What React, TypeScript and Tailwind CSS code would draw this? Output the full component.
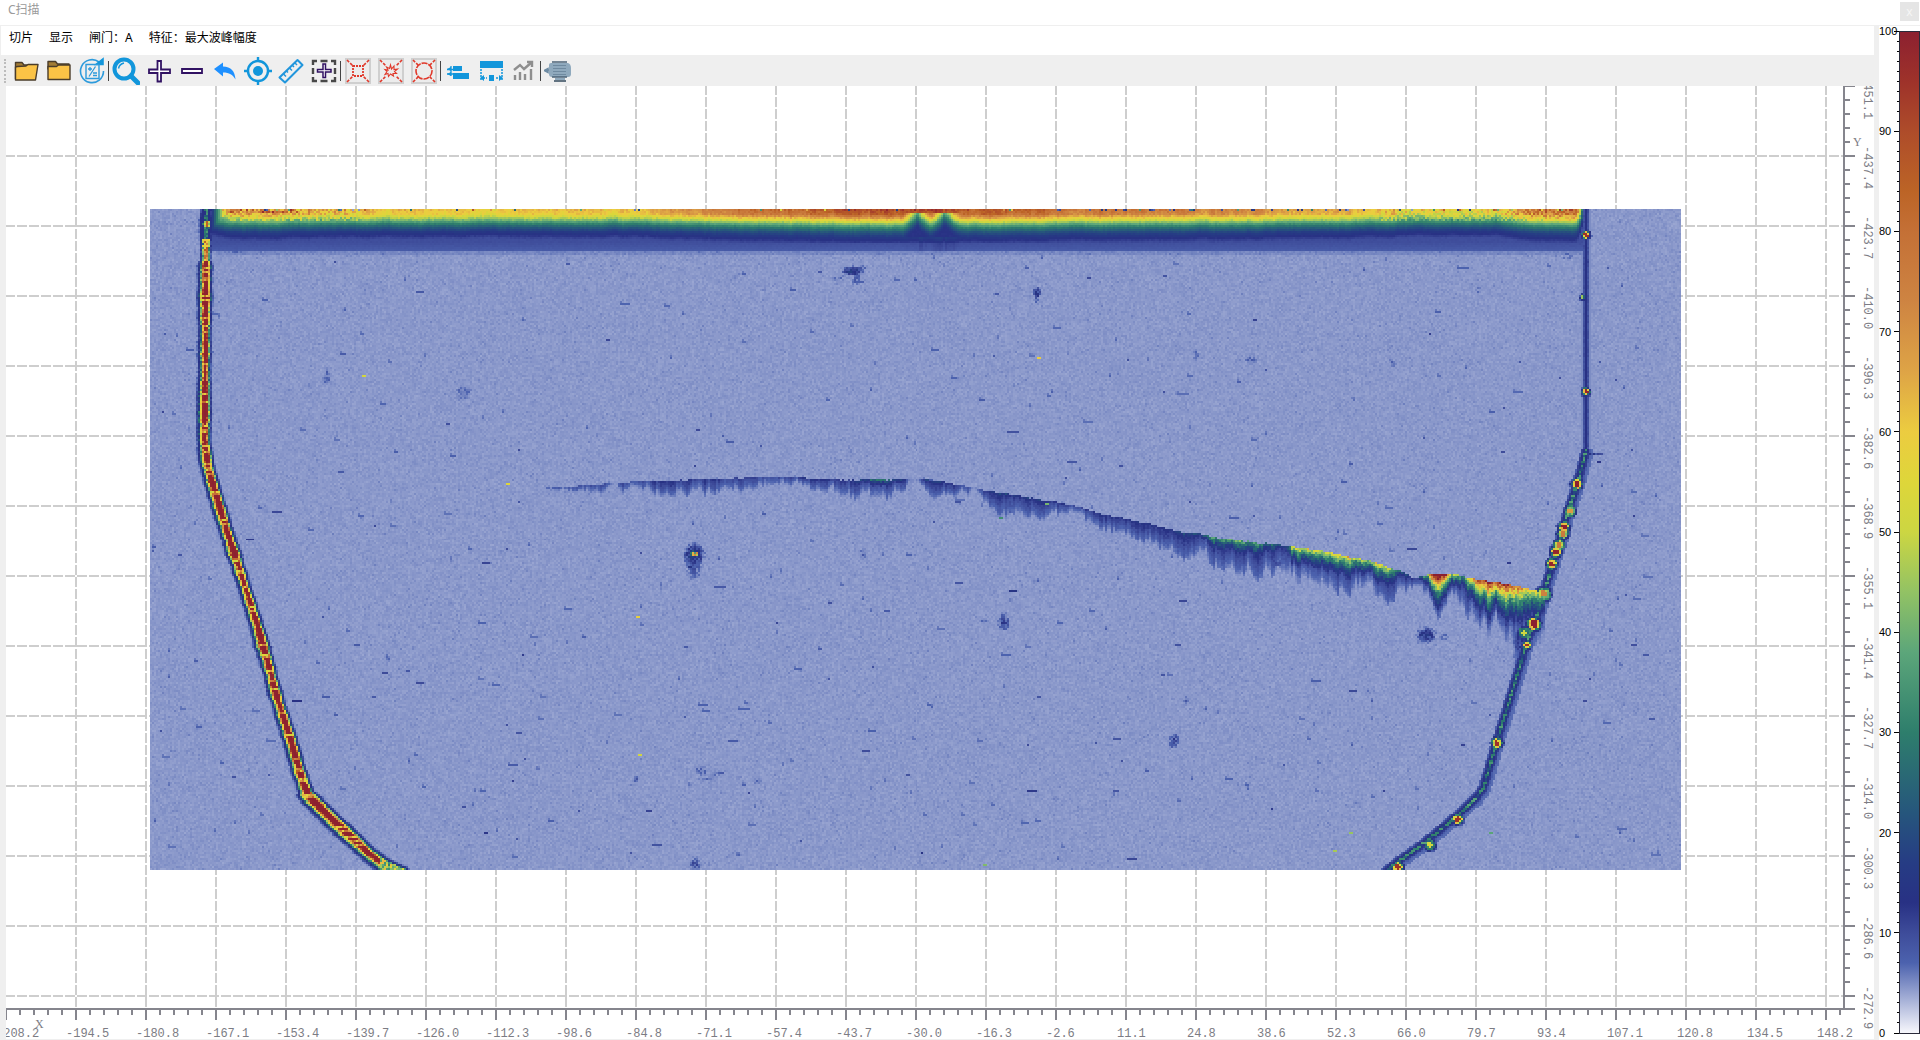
import { useEffect, useRef } from 'react';
import type { ReactNode } from 'react';

const COLUMNS = 766;
const ROWS = 331;
const ORIGIN_X = 150;
const ORIGIN_Y = 209;
const STEP = 70;

const X_LABELS = [
  '-208.2', '-194.5', '-180.8', '-167.1', '-153.4', '-139.7', '-126.0', '-112.3', '-98.6',
  '-84.8', '-71.1', '-57.4', '-43.7', '-30.0', '-16.3', '-2.6', '11.1', '24.8', '38.6',
  '52.3', '66.0', '79.7', '93.4', '107.1', '120.8', '134.5', '148.2'
];

const Y_LABELS = [
  '-451.1', '-437.4', '-423.7', '-410.0', '-396.3', '-382.6', '-368.9',
  '-355.1', '-341.4', '-327.7', '-314.0', '-300.3', '-286.6', '-272.9'
];

// amplitude (%) -> colour
const PALETTE: [number, number, number, number][] = [
  [0, 247, 247, 252],
  [7, 76, 98, 174],
  [10, 62, 76, 154],
  [13, 40, 49, 132],
  [17, 38, 60, 132],
  [22, 38, 86, 124],
  [30, 46, 126, 108],
  [38, 92, 166, 122],
  [44, 146, 194, 100],
  [50, 204, 214, 66],
  [55, 222, 214, 58],
  [60, 236, 204, 64],
  [66, 222, 164, 70],
  [73, 206, 132, 66],
  [80, 196, 112, 54],
  [84, 188, 100, 38],
  [90, 174, 76, 42],
  [95, 158, 50, 42],
  [100, 140, 32, 48]
];

type Point = [number, number];

const LEFT_WALL: Point[] = [
  [207, 205], [206, 300], [205, 440], [208, 465], [215, 490], [227, 530], [243, 580], [258, 627],
  [270, 670], [278, 700], [291, 740], [300, 772], [308, 795], [322, 810], [335, 822], [352, 838],
  [370, 855], [386, 866], [402, 874]
];

const LEFT_PROFILE: Point[] = [
  [0, 100], [2.6, 98], [3.4, 66], [4.4, 50], [5.2, 32], [6.2, 15], [7.6, 11], [8.6, 6.5], [9.6, 4]
];

const RIGHT_WALL: Point[] = [
  [1587, 205], [1587, 450], [1583, 466], [1578, 485], [1573, 500], [1567, 518], [1560, 545],
  [1553, 567], [1546, 590], [1538, 617], [1527, 646], [1511, 700], [1498, 742], [1490, 770],
  [1484, 790], [1477, 799], [1460, 815], [1440, 832], [1420, 848], [1400, 862], [1386, 873]
];

const CRACK_EDGE: Point[] = [
  [545, 488], [600, 484], [640, 482], [700, 479], [770, 477], [800, 478], [830, 480], [900, 480],
  [925, 479], [950, 483], [985, 490], [1020, 496], [1060, 503], [1100, 513], [1150, 524],
  [1180, 531], [1240, 541], [1290, 547], [1330, 553], [1380, 564], [1400, 571], [1416, 580],
  [1430, 575], [1450, 574], [1480, 581], [1520, 587], [1546, 594]
];

const CRACK_LEVEL: Point[] = [
  [545, 6], [600, 9], [700, 12], [760, 9], [798, 10], [802, 18], [850, 12], [855, 20], [880, 30],
  [904, 18], [908, 6], [922, 7], [926, 20], [960, 13], [975, 7], [1000, 18], [1050, 16],
  [1100, 13], [1170, 16], [1200, 20], [1210, 34], [1250, 34], [1288, 20], [1293, 56], [1340, 50],
  [1380, 54], [1400, 28], [1416, 12], [1428, 44], [1434, 110], [1444, 110], [1452, 64], [1465, 30],
  [1475, 76], [1490, 105], [1500, 105], [1515, 80], [1530, 50], [1546, 54]
];

const CRACK_DEPTH: Point[] = [
  [545, 3], [600, 9], [700, 14], [800, 9], [830, 15], [880, 20], [904, 14], [910, 6], [922, 6],
  [930, 16], [980, 9], [1005, 24], [1060, 15], [1100, 14], [1200, 24], [1285, 28], [1300, 32],
  [1390, 26], [1416, 10], [1432, 24], [1440, 40], [1450, 22], [1465, 30], [1490, 52], [1546, 50]
];

const BAND_LEVEL: Point[] = [
  [207, 50], [225, 66], [245, 72], [280, 70], [340, 63], [500, 62], [650, 65], [720, 76],
  [850, 92], [900, 94], [1000, 88], [1100, 80], [1250, 72], [1350, 65], [1420, 57], [1500, 58],
  [1535, 78], [1565, 88], [1578, 80], [1583, 30]
];

const BAND_PROFILE: Point[] = [
  [0, 1], [5, 0.94], [8, 0.8], [11, 0.66], [14, 0.51], [18, 0.37], [23, 0.25], [28, 0.18],
  [32, 0.14], [36, 0.11]
];

// x, y, radius, amplitude
const HOT_SPOTS: number[][] = [
  [207, 224, 3, 85], [1587, 235, 3, 95], [1584, 297, 2, 45], [1587, 392, 3, 98], [1578, 484, 4, 100],
  [1571, 511, 4, 68], [1565, 527, 4, 100], [1564, 534, 4, 76], [1560, 546, 4, 76], [1557, 553, 4, 98],
  [1553, 565, 4, 98], [1545, 595, 5, 74], [1535, 625, 5, 100], [1525, 634, 4, 50], [1528, 646, 3, 95],
  [1498, 744, 4, 95], [1459, 820, 4, 95], [1431, 846, 4, 52], [1399, 868, 4, 95],
  [693, 555, 2, 64], [696, 555, 2, 72]
];

// x, y, half width, half height, amplitude
const BLOBS: number[][] = [
  [694, 556, 9, 10, 20], [694, 568, 9, 14, 10], [853, 271, 9, 4, 20], [856, 278, 5, 9, 10],
  [840, 278, 12, 4, 7], [860, 268, 8, 4, 9], [1038, 293, 4, 6, 15], [1038, 298, 4, 8, 8],
  [327, 380, 6, 6, 9], [327, 375, 3, 12, 8], [464, 391, 11, 7, 7.5], [460, 398, 12, 4, 7],
  [1252, 360, 10, 5, 8], [1197, 355, 4, 7, 7.5], [1393, 363, 5, 6, 8], [1005, 623, 6, 9, 13],
  [1012, 601, 4, 6, 7], [985, 622, 6, 3, 7], [1427, 636, 9, 7, 17], [1445, 638, 6, 5, 8],
  [1175, 742, 5, 8, 13], [1188, 702, 5, 6, 8], [702, 772, 8, 5, 10], [718, 774, 10, 4, 9],
  [710, 780, 14, 4, 7], [757, 782, 5, 5, 8], [636, 780, 4, 5, 9], [695, 865, 6, 7, 12],
  [863, 555, 5, 7, 8], [388, 658, 4, 6, 7], [1278, 562, 7, 8, 11], [1521, 643, 7, 18, 13],
  [1518, 668, 5, 20, 8], [1479, 290, 5, 5, 7], [1370, 690, 4, 6, 7], [1358, 806, 6, 5, 7],
  [235, 250, 18, 6, 7.5], [262, 244, 30, 5, 8], [1550, 247, 34, 6, 8], [1568, 256, 12, 6, 7],
  [1442, 462, 5, 4, 7], [1593, 454, 12, 1, 14], [1010, 505, 9, 14, 9], [1505, 785, 1, 1, 8]
];

function createRandom(seed: number) {
  let state = seed;
  return () => {
    state = (state + 0x6d2b79f5) | 0;
    let t = Math.imul(state ^ (state >>> 15), 1 | state);
    t = (t + Math.imul(t ^ (t >>> 7), 61 | t)) ^ t;
    return ((t ^ (t >>> 14)) >>> 0) / 4294967296;
  };
}

function interpolate(points: Point[], x: number) {
  if (x <= points[0][0]) return points[0][1];
  for (let i = 1; i < points.length; i++) {
    if (x <= points[i][0]) {
      const [x0, y0] = points[i - 1];
      const [x1, y1] = points[i];
      return y0 + ((y1 - y0) * (x - x0)) / (x1 - x0);
    }
  }
  return points[points.length - 1][1];
}

// signed distance, positive on the right hand side of a wall
function wallDistance(points: Point[], x: number, y: number) {
  let best = 999;
  let sign = 1;
  for (let i = 1; i < points.length; i++) {
    const [x0, y0] = points[i - 1];
    const [x1, y1] = points[i];
    const dx = x1 - x0;
    const dy = y1 - y0;
    const t = Math.max(0, Math.min(1, ((x - x0) * dx + (y - y0) * dy) / (dx * dx + dy * dy)));
    const d = Math.hypot(x - x0 - t * dx, y - y0 - t * dy);
    if (d < best) {
      best = d;
      sign = dy * (x - x0) - dx * (y - y0) >= 0 ? 1 : -1;
    }
  }
  return best * sign;
}

function paletteColor(value: number) {
  const v = Math.max(0, Math.min(100, value));
  let i = 1;
  while (i < PALETTE.length - 1 && v > PALETTE[i][0]) i++;
  const a = PALETTE[i - 1];
  const b = PALETTE[i];
  const t = (v - a[0]) / (b[0] - a[0]);
  return [a[1] + (b[1] - a[1]) * t, a[2] + (b[2] - a[2]) * t, a[3] + (b[3] - a[3]) * t];
}

function buildScan() {
  const random = createRandom(20240);
  const field = new Float32Array(COLUMNS * ROWS);
  const rowDrop = Array.from({ length: ROWS }, () => random());
  const rowNoise: number[] = [];
  let sway = 0;
  for (let i = 0; i < ROWS; i++) {
    sway = sway * 0.85 + (random() - 0.5) * 0.8;
    rowNoise.push(sway + (random() - 0.5) * 0.6);
  }
  const colNoise: number[] = [];
  let drift = 0;
  for (let i = 0; i < COLUMNS; i++) {
    drift = drift * 0.7 + (random() - 0.5) * 0.6;
    colNoise.push(drift);
  }

  for (let r = 0; r < ROWS; r++) {
    const y = ORIGIN_Y + r * 2 + 1;
    for (let c = 0; c < COLUMNS; c++) {
      const x = ORIGIN_X + c * 2 + 1;
      let v = 4.45 + (random() + random() - 1) * 0.65;
      if (random() < 0.025) v += 0.7;

      // surface echo along the top
      const d = y - ORIGIN_Y;
      if (x > 208 && x < 1585 && d < 43) {
        const level = interpolate(BAND_LEVEL, x) * (1 + colNoise[c] * 0.12);
        let echo = d < 34 ? Math.max(9.8, level * interpolate(BAND_PROFILE, d)) : 9.6 - (d - 34) * 0.22;
        const notch = Math.max(1 - Math.abs(x - 918) / 15, 1 - Math.abs(x - 946) / 16, 0);
        if (notch > 0) {
          if (d > 4 && d < 28) echo = Math.max(13, echo * (1 - notch * 0.6));
          if (d >= 28) echo += colNoise[c] * 5 * notch + notch * 2;
        }
        const speckle = x < 360 || x > 1380 ? 0.2 : 0.06;
        echo *= 1 + (random() - 0.5) * (d < 12 ? speckle * 1.6 : 0.06);
        if (d < 3 && random() < speckle) echo = random() * 100;
        if (x < 300 && d < 5 && random() < 0.3) echo = 75 + random() * 25;
        if (x > 1040 && x < 1380 && d < 3 && random() < 0.12) echo = 5 + random() * 12;
        if (x < 222) echo = Math.min(echo, 8 + Math.max(0, x - 210) * 3.2);
        v = Math.max(v, echo);
      } else if (x > 215 && x < 1585 && d < 46) {
        v += 0.8;
      }

      // left wall
      if (x < 430) {
        const s = wallDistance(LEFT_WALL, x, y);
        let a = s > 0 ? s * 1.3 : -s * 0.95;
        a += rowNoise[r] + (random() - 0.5) * 0.9;
        if (y > 795) a *= 0.84;
        if (y < 262) a *= 1.25;
        if (a < 9.6) {
          let w = interpolate(LEFT_PROFILE, Math.max(0, a));
          if (y < 240) w = Math.min(w, a < 2.5 ? 18 + random() * 18 : 13);
          else if (y < 262) w = Math.min(w, 55 + random() * 35);
          else if (a < 3 && rowDrop[r] < 0.16) w = 50 + random() * 35;
          if (x > 380) w = Math.min(w, 30 + random() * 35);
          v = Math.max(v, w);
        }
      }

      // right wall
      if (x > 1370) {
        const s = wallDistance(RIGHT_WALL, x, y);
        const a = Math.abs(s);
        if (a < 8) {
          const low = y >= 450;
          let w = 4;
          if (a < 1.3) w = low ? 18 + rowDrop[r] * 20 : 13;
          else if (a < 2.7) w = low ? 13 + random() * 2 : 10.5 - random() * 2;
          else if (a < 4) w = low ? 11.5 : 6.4;
          else if (a < 5.2) w = low ? 7.8 : 5;
          else if (s > 0 && low) w = 6.6;
          v = Math.max(v, w);
        }
      }

      // crack and the tail that hangs under it
      if (x > 545 && x < 1546) {
        const top = interpolate(CRACK_EDGE, x) + colNoise[c] * 1.5;
        const depth = interpolate(CRACK_DEPTH, x) * (1 + colNoise[c] * 0.7);
        const under = y - top;
        if (under >= 0 && under < depth) {
          const t = under / depth;
          const level = interpolate(CRACK_LEVEL, x) * (1 + colNoise[c] * 0.4);
          const jitter = 1 + (random() - 0.5) * 0.35;
          const head = level * Math.exp(-under / (depth * 0.28 + 1.5)) * jitter;
          const tail = Math.min(13, level * 0.7 + 3) * (1 + colNoise[c] * 0.35) * (1 - t * 0.62) * (1 + (random() - 0.5) * 0.2);
          v = Math.max(v, head, tail);
        }
      }

      for (const [bx, by, bw, bh, level] of BLOBS) {
        const dx = (x - bx) / bw;
        const dy = (y - by) / bh;
        const q = dx * dx + dy * dy;
        if (q < 1.6) v = Math.max(v, level * Math.exp(-q * 0.8) * (0.5 + random() * 0.65));
      }

      for (const [hx, hy, radius, level] of HOT_SPOTS) {
        const q = (Math.hypot(x - hx, y - hy) + (random() - 0.5)) / radius;
        if (q < 1.9) {
          const glow = q < 0.65 ? level : q < 1.05 ? level * 0.58 : q < 1.35 ? 28 : q < 1.65 ? 13 : 8;
          v = Math.max(v, glow * (q < 0.65 ? 1 : 0.85 + random() * 0.3));
        }
      }

      field[r * COLUMNS + c] = v;
    }
  }

  // scattered short echoes
  for (let i = 0; i < 420; i++) {
    const r = 24 + Math.floor(random() * (ROWS - 26));
    const c = Math.floor(random() * (COLUMNS - 10));
    const length = 1 + Math.floor(random() * random() * 6);
    const bright = i % 40 === 0;
    const level = bright ? 30 + random() * 30 : 6.2 + random() * random() * random() * 11;
    for (let k = 0; k < (bright ? 2 : length); k++) {
      const index = r * COLUMNS + c + k;
      field[index] = Math.max(field[index], level);
    }
    if (level < 8) {
      const above = (r - 1) * COLUMNS + c;
      field[above] = Math.max(field[above], 6);
    }
  }
  return field;
}

function ScanImage() {
  const ref = useRef<HTMLCanvasElement>(null);

  useEffect(() => {
    const context = ref.current?.getContext('2d');
    if (!context) return;
    const field = buildScan();
    const image = context.createImageData(COLUMNS, ROWS);
    field.forEach((value, i) => {
      const [red, green, blue] = paletteColor(value);
      image.data[i * 4] = red;
      image.data[i * 4 + 1] = green;
      image.data[i * 4 + 2] = blue;
      image.data[i * 4 + 3] = 255;
    });
    context.putImageData(image, 0, 0);
  }, []);

  return (
    <canvas
      ref={ref}
      width={COLUMNS}
      height={ROWS}
      className="absolute left-36 top-[123px] h-[661px] w-[1531px] max-w-none [image-rendering:pixelated]"
    />
  );
}

function Grid() {
  return (
    <svg className="block h-full w-full" shapeRendering="crispEdges" stroke="#cecece" strokeWidth="2" strokeDasharray="10 2">
      {X_LABELS.slice(1).map((label, i) => (
        <line key={label} x1={(i + 1) * STEP} x2={(i + 1) * STEP} y1={-1} y2="100%" />
      ))}
      {Y_LABELS.slice(1).map((label, i) => (
        <line key={label} x1={-1} x2="100%" y1={(i + 1) * STEP} y2={(i + 1) * STEP} />
      ))}
    </svg>
  );
}

function XRuler() {
  const ticks = Array.from({ length: (X_LABELS.length - 1) * 5 + 2 }, (_, i) => i);
  return (
    <svg className="block h-[31px] w-full overflow-visible">
      <g fill="#85858d" shapeRendering="crispEdges">
        <rect width="100%" height="2" />
        {ticks.map((i) => (
          <rect key={i} x={i * 14 - 1} y="2" width="2" height={i % 5 === 0 ? 10 : 5} />
        ))}
      </g>
      <g fill="#7c7c84" className="font-['Liberation_Mono',monospace] text-[12px]">
        {X_LABELS.map((label, i) => (
          <text key={label} x={i * STEP - (label.startsWith('-') ? 10 : 9)} y="29">{label}</text>
        ))}
      </g>
      <text x="29" y="20" fill="#7c7c84" className="font-['Liberation_Serif',serif] text-[12px]">X</text>
    </svg>
  );
}

function YRuler() {
  const ticks = Array.from({ length: (Y_LABELS.length - 1) * 5 + 1 }, (_, i) => i);
  return (
    <svg className="block h-full w-[31px] shrink-0 overflow-visible">
      <g fill="#85858d" shapeRendering="crispEdges">
        <rect width="2" height="100%" />
        {ticks.map((i) => (
          <rect key={i} x="2" y={i * 14 - 1} width={i % 5 === 0 ? 10 : 5} height="2" />
        ))}
      </g>
      <g fill="#7c7c84" className="font-['Liberation_Mono',monospace] text-[12px]">
        {Y_LABELS.map((label, i) => (
          <text key={label} transform={`translate(21 ${i * STEP - 10}) rotate(90)`}>{label}</text>
        ))}
      </g>
      <text x="10" y="60" fill="#7c7c84" className="font-['Liberation_Serif',serif] text-[12px]">Y</text>
    </svg>
  );
}

function ColorScale() {
  const marks = Array.from({ length: 101 }, (_, i) => i);
  return (
    <aside className="ml-[5px] w-[41px] shrink-0 bg-white pb-[7px] pt-[5px]">
      <svg className="block h-full w-full overflow-visible" shapeRendering="crispEdges">
        <defs>
          <linearGradient id="amplitude" x1="0" y1="1" x2="0" y2="0">
            {PALETTE.map(([at, red, green, blue]) => (
              <stop key={at} offset={`${at}%`} stopColor={`rgb(${red}, ${green}, ${blue})`} />
            ))}
          </linearGradient>
        </defs>
        <rect x="20" width="20" height="100%" fill="url(#amplitude)" stroke="#2a2a3a" strokeWidth="1" />
        {marks.map((value) => (
          <line
            key={value}
            x1={value % 10 === 0 ? 15 : 18}
            x2="20"
            y1={`${100 - value}%`}
            y2={`${100 - value}%`}
            stroke="#000"
          />
        ))}
        {marks.filter((value) => value % 10 === 0).map((value) => (
          <text
            key={value}
            x="0"
            y={`${100 - value}%`}
            dy="4"
            className="font-['Liberation_Sans',sans-serif] text-[11px]"
          >
            {value}
          </text>
        ))}
      </svg>
    </aside>
  );
}

function Corners() {
  return (
    <>
      <rect x="2" y="2" width="24" height="24" fill="#ececec" stroke="#cfcfcf" strokeWidth="2" />
      <path d="M3 3l6 6M25 3l-6 6M3 25l6-6M25 25l-6-6" stroke="#e0392b" strokeWidth="1.6" strokeDasharray="3 1.5" />
    </>
  );
}

const ICONS: Record<string, ReactNode> = {
  open: (
    <g stroke="#4a3c2a" strokeWidth="1.4" strokeLinejoin="round">
      <path d="M3.5 22V5.5H10l2 2.5h12v4" fill="#a37c35" />
      <path d="M5.5 9.5 14 9l2-1.5h10L23.5 23h-20L3.5 10z" fill="#fbc346" />
    </g>
  ),
  folder: (
    <g stroke="#4a3c2a" strokeWidth="1.4" strokeLinejoin="round">
      <path d="M3 12V4.500h7.500l2 2.500H24v5z" fill="#a37c35" />
      <path d="M3 9.500h8.500L13.500 8H25v14.500H3z" fill="#fbc346" />
    </g>
  ),
  recalculate: (
    <g stroke="#2d9bdc" fill="none" strokeWidth="1.6">
      <path d="M21 5A11.500 11.500 0 1 0 25.500 14" />
      <path d="M18 7.500h7V2z" fill="#1296db" stroke="#1296db" />
      <path d="M8 7.500h13v14H8z" strokeWidth="1.4" />
      <path d="M17.500 9.500l-6.500 10M10 12h4M12 10v4M15 16h4M15 18.500h4" strokeWidth="1.3" />
    </g>
  ),
  zoom: (
    <g stroke="#1296db" fill="none">
      <circle cx="12" cy="12" r="9.5" strokeWidth="4" />
      <path d="M6.500 11.500q1-4.500 5.500-5.500" strokeWidth="1.5" />
      <path d="M19 19l7 7" strokeWidth="5" strokeLinecap="round" />
    </g>
  ),
  plus: <path d="M12.500 4h3.500v8.500h9V16h-9v8.500h-3.500V16H4v-3.500h8.500z" fill="#fff" stroke="#311263" strokeWidth="1.8" />,
  minus: <path d="M4 12h20v4H4z" fill="#fff" stroke="#311263" strokeWidth="1.8" />,
  undo: <path d="M3 12l9-6.500v4c8 0 12 5 12.500 13-3-5-6-7-12.500-7v4z" fill="#1e90ff" />,
  target: (
    <g stroke="#1296db" strokeWidth="2.4" fill="none">
      <circle cx="14" cy="14" r="10" />
      <circle cx="14" cy="14" r="5" fill="#1296db" stroke="none" />
      <path d="M14 0v5M14 23v5M0 14h5M23 14h5" />
    </g>
  ),
  ruler: (
    <g stroke="#2196dc" strokeWidth="2" fill="none" strokeLinejoin="round">
      <path d="M2.500 20.500 20.500 3l5 5L8 25.500z" />
      <path d="M6.500 17l2.500 2.500M9.500 14l1.500 1.500M12.500 11l2.500 2.500M15.500 8.500l1.500 1.500M18 6l2 2" strokeWidth="1.5" />
    </g>
  ),
  selectArea: (
    <g fill="none">
      <path
        d="M3 8V4h4M10.500 4h7M21 4h4v4M25 11v6M25 20v4h-4M17.500 24h-7M7 24H3v-4M3 17v-6"
        stroke="#484848"
        strokeWidth="2.4"
      />
      <path d="M13 7h2.500v5.500H21V15h-5.500v5.500H13V15H7.500v-2.500H13z" fill="#fff" stroke="#311263" strokeWidth="1.5" />
    </g>
  ),
  squareGate: (
    <g fill="none">
      <Corners />
      <path d="M9 9h10v10H9z" stroke="#e0392b" strokeWidth="1.8" strokeDasharray="2 1" />
    </g>
  ),
  burstGate: (
    <g fill="none">
      <Corners />
      <path
        d="M13.500 8l1 4 2.500-3v3.500l3.500-.5-3 2.500 2 2-3.500 0 .5 2.500-3-2-2 2.500-.5-3-3 1 2-3-2-2 3 .5-1.500-3 3 1.500z"
        stroke="#e0392b"
        strokeWidth="1.1"
      />
    </g>
  ),
  circleGate: (
    <g fill="none">
      <Corners />
      <circle cx="14" cy="14" r="8" stroke="#e0392b" strokeWidth="1.6" strokeDasharray="6 1" />
    </g>
  ),
  align: (
    <g fill="#1296db">
      <rect x="9" y="9" width="9" height="5" />
      <rect x="9" y="16" width="16" height="6" />
      <path d="M3 12l4-2v4zM3 17l4-2v4z" />
      <path d="M7 9v10M3 12.500h6M3 17h6" stroke="#1296db" strokeWidth="1.3" />
    </g>
  ),
  fitWidth: (
    <g fill="#1296db">
      <rect x="3" y="4" width="23" height="7" />
      <rect x="12" y="18" width="5" height="6" />
      <path d="M3 21l4-3v6zM26 21l-4-3v6z" />
      <path d="M4 12v12M25 12v12M6 21h4M19 21h4" stroke="#1296db" strokeWidth="1.5" strokeDasharray="2 1" />
    </g>
  ),
  chart: (
    <g stroke="#8e8e8e" strokeWidth="2.4" fill="none">
      <path d="M5 23v-5M10 23v-8M15 23v-6M21 23V12" />
      <path d="M4 13l6-5 4 4 8-7" />
      <path d="M17 5h5v5" />
    </g>
  ),
  motor: (
    <g>
      <path d="M0 13.500l4-2v4zM3 13h4" fill="#6d8ba3" stroke="#6d8ba3" strokeWidth="1.5" />
      <path d="M5 8q0-2 2-2h17q3 1 3 5v6q0 3-3 3H8q-3 0-3-3z" fill="#8fa9bd" />
      <path d="M8 5h15M8 20h15" stroke="#4c6377" strokeWidth="1.6" />
      <path d="M9 8.500h13M9 11.500h13M9 14.500h13M9 17.500h13" stroke="#6f8aa0" strokeWidth="1.2" />
      <path d="M11 21h10v2H11z" fill="#8fa9bd" />
      <path d="M10 24h12" stroke="#3f5466" strokeWidth="1.6" />
    </g>
  )
};

const TOOL_GROUPS = [
  ['open', 'folder', 'recalculate'],
  ['zoom', 'plus', 'minus', 'undo', 'target', 'ruler', 'selectArea'],
  ['squareGate', 'burstGate', 'circleGate'],
  ['align', 'fitWidth', 'chart'],
  ['motor']
];

function Toolbar() {
  return (
    <div role="toolbar" className="flex h-[31px] items-center bg-[#efefef] pl-1">
      <div className="mr-[3px] h-6 border-l-2 border-dotted border-[#bcbcbc]" />
      {TOOL_GROUPS.map((group, i) => (
        <div key={group[0]} className="flex items-center">
          {i > 0 && <div className="h-5 w-px bg-[#444]" />}
          {group.map((name) => (
            <button key={name} type="button" aria-label={name} className="flex h-[31px] w-[33px] items-center justify-center">
              <svg viewBox="0 0 28 28" className="size-7">{ICONS[name]}</svg>
            </button>
          ))}
        </div>
      ))}
    </div>
  );
}

export default function App() {
  const menus = ['切片', '显示', '闸门：A', '特征：最大波峰幅度'];

  return (
    <div className="flex h-screen flex-col overflow-hidden bg-white font-['Noto_Sans','Noto_Sans_CJK_SC',sans-serif] text-[12px] leading-4 text-black">
      <header className="flex h-[25px] shrink-0 items-start justify-between pl-2">
        <h1 className="pt-[2px] text-[#9a9a9a]">C扫描</h1>
        <button type="button" className="mr-px mt-[2px] flex size-[19px] items-center justify-center bg-[#e5e5e5] leading-none text-[#f6f6f6]">
          x
        </button>
      </header>

      <div className="flex min-h-0 flex-1 border-t border-[#efefef] bg-[#efefef]">
        <main className="flex min-w-0 flex-1 flex-col">
          <nav className="ml-px flex h-[29px] shrink-0 items-start gap-4 bg-white pl-2 pt-1">
            {menus.map((menu) => (
              <button key={menu} type="button">{menu}</button>
            ))}
          </nav>
          <Toolbar />
          <div className="mb-px ml-[6px] flex min-h-0 flex-1 flex-col overflow-hidden bg-white">
            <div className="flex min-h-0 flex-1">
              <div className="relative min-w-0 flex-1 overflow-hidden">
                <Grid />
                <ScanImage />
              </div>
              <YRuler />
            </div>
            <div className="pr-[19px]">
              <XRuler />
            </div>
          </div>
        </main>
        <ColorScale />
      </div>
    </div>
  );
}
